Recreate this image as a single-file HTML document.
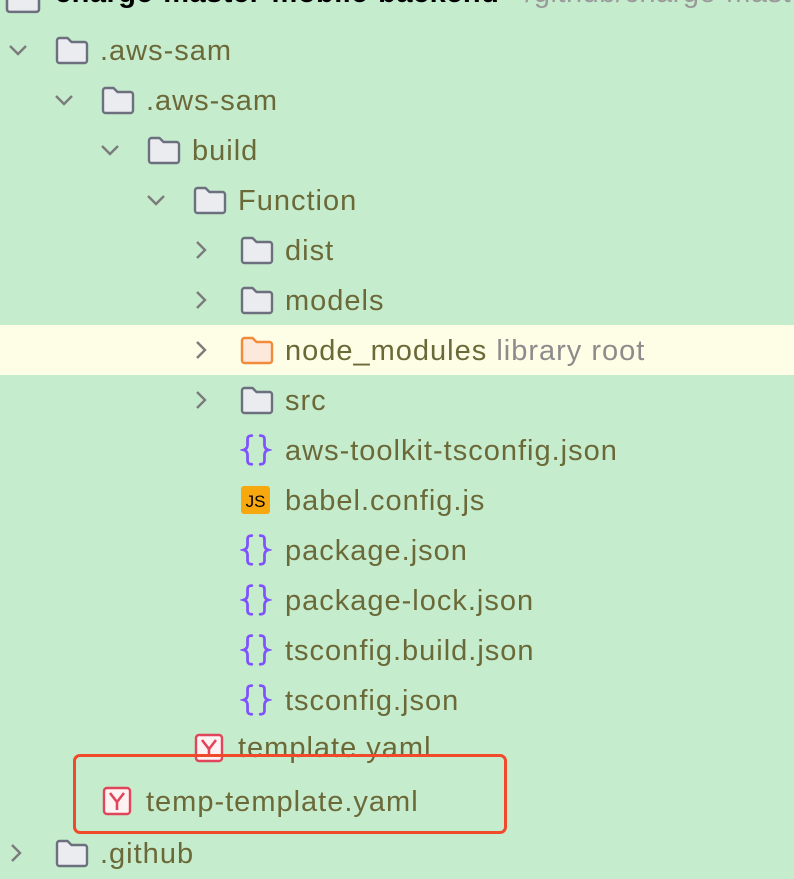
<!DOCTYPE html>
<html><head><meta charset="utf-8"><style>
body{margin:0;width:794px;height:862px;overflow:hidden;background:#c6ecce;font-family:"Liberation Sans","DejaVu Sans",sans-serif;position:relative}
.r{position:absolute;left:0;width:794px;height:50px}
.t{position:absolute;top:1px;line-height:50px;font-size:29px;letter-spacing:1px;color:#6b6938;white-space:nowrap}
.i{position:absolute}
.hl{background:#fefde6}
.box{position:absolute;left:73px;top:754px;width:428px;height:74px;border:3px solid #f04a2a;border-radius:7px}
</style></head><body>
<svg width="0" height="0" style="position:absolute"><defs>
<symbol id="f" viewBox="0 0 36 30"><path d="M3 5.5a2.5 2.5 0 0 1 2.5-2.5h8l4 4h13a2.5 2.5 0 0 1 2.5 2.5v16a2.5 2.5 0 0 1-2.5 2.5h-25A2.5 2.5 0 0 1 3 25.5z" fill="#ebecf0" stroke="#6c707e" stroke-width="2.4" stroke-linejoin="round"/></symbol>
<symbol id="fo" viewBox="0 0 36 30"><path d="M3 5.5a2.5 2.5 0 0 1 2.5-2.5h8l4 4h13a2.5 2.5 0 0 1 2.5 2.5v16a2.5 2.5 0 0 1-2.5 2.5h-25A2.5 2.5 0 0 1 3 25.5z" fill="#fde8dc" stroke="#f08b3a" stroke-width="2.4" stroke-linejoin="round"/></symbol>
<symbol id="cd" viewBox="0 0 20 12"><path d="M2 2l8 8 8-8" fill="none" stroke="#7b7b7b" stroke-width="2.4"/></symbol>
<symbol id="cr" viewBox="0 0 12 20"><path d="M2 2l8 8-8 8" fill="none" stroke="#7b7b7b" stroke-width="2.4"/></symbol>
<symbol id="j" viewBox="0 0 30 34"><path d="M11 2.5c-3 0-4 1-4 3.5v5c0 2.5-1 4.3-3.5 5 2.5.7 3.5 2.5 3.5 5v5c0 2.5 1 3.5 4 3.5M19 2.5c3 0 4 1 4 3.5v5c0 2.5 1 4.3 3.5 5-2.5.7-3.5 2.5-3.5 5v5c0 2.5-1 3.5-4 3.5" fill="none" stroke="#7f52ff" stroke-width="2.6" stroke-linecap="round"/></symbol>
<symbol id="y" viewBox="0 0 30 30"><rect x="2" y="2" width="26" height="26" rx="3" fill="#fff2f3" stroke="#e0455a" stroke-width="2.4"/><path d="M8 7l7 9 7-9M15 16v8" fill="none" stroke="#e0455a" stroke-width="2.6"/></symbol>
</defs></svg>

<div class="r" style="top:-28px"><svg class="i" style="left:3px;top:10px" width="40" height="32"><use href="#f"/></svg><span class="t" style="left:55px;color:#000;font-weight:bold;line-height:40px;letter-spacing:0.5px">charge-master-mobile-backend <span style="color:#9a9a9a;font-weight:normal">~/github/charge-master</span></span></div>

<div class="r" style="top:25px"><svg class="i" style="left:8px;top:19px" width="20" height="12"><use href="#cd"/></svg><svg class="i" style="left:54px;top:10px" width="36" height="30"><use href="#f"/></svg><span class="t" style="left:100px">.aws-sam</span></div>
<div class="r" style="top:75px"><svg class="i" style="left:54px;top:19px" width="20" height="12"><use href="#cd"/></svg><svg class="i" style="left:100px;top:10px" width="36" height="30"><use href="#f"/></svg><span class="t" style="left:146px">.aws-sam</span></div>
<div class="r" style="top:125px"><svg class="i" style="left:100px;top:19px" width="20" height="12"><use href="#cd"/></svg><svg class="i" style="left:146px;top:10px" width="36" height="30"><use href="#f"/></svg><span class="t" style="left:192px">build</span></div>
<div class="r" style="top:175px"><svg class="i" style="left:146px;top:19px" width="20" height="12"><use href="#cd"/></svg><svg class="i" style="left:192px;top:10px" width="36" height="30"><use href="#f"/></svg><span class="t" style="left:238px">Function</span></div>
<div class="r" style="top:225px"><svg class="i" style="left:195px;top:15px" width="12" height="20"><use href="#cr"/></svg><svg class="i" style="left:239px;top:10px" width="36" height="30"><use href="#f"/></svg><span class="t" style="left:285px">dist</span></div>
<div class="r" style="top:275px"><svg class="i" style="left:195px;top:15px" width="12" height="20"><use href="#cr"/></svg><svg class="i" style="left:239px;top:10px" width="36" height="30"><use href="#f"/></svg><span class="t" style="left:285px">models</span></div>
<div class="r hl" style="top:325px"><svg class="i" style="left:195px;top:15px" width="12" height="20"><use href="#cr"/></svg><svg class="i" style="left:239px;top:10px" width="36" height="30"><use href="#fo"/></svg><span class="t" style="left:285px">node_modules <span style="color:#8c8c8c">library root</span></span></div>
<div class="r" style="top:375px"><svg class="i" style="left:195px;top:15px" width="12" height="20"><use href="#cr"/></svg><svg class="i" style="left:239px;top:10px" width="36" height="30"><use href="#f"/></svg><span class="t" style="left:285px">src</span></div>
<div class="r" style="top:425px"><svg class="i" style="left:240px;top:8px" width="32" height="36"><use href="#j"/></svg><span class="t" style="left:285px">aws-toolkit-tsconfig.json</span></div>
<div class="r" style="top:475px"><div class="i" style="left:241px;top:11px;width:29px;height:28px;background:#f7a80f;border-radius:3px;font:17px 'Liberation Sans',sans-serif;color:#000;text-align:center;line-height:31px">JS</div><span class="t" style="left:285px">babel.config.js</span></div>
<div class="r" style="top:525px"><svg class="i" style="left:240px;top:8px" width="32" height="36"><use href="#j"/></svg><span class="t" style="left:285px">package.json</span></div>
<div class="r" style="top:575px"><svg class="i" style="left:240px;top:8px" width="32" height="36"><use href="#j"/></svg><span class="t" style="left:285px">package-lock.json</span></div>
<div class="r" style="top:625px"><svg class="i" style="left:240px;top:8px" width="32" height="36"><use href="#j"/></svg><span class="t" style="left:285px">tsconfig.build.json</span></div>
<div class="r" style="top:675px"><svg class="i" style="left:240px;top:8px" width="32" height="36"><use href="#j"/></svg><span class="t" style="left:285px">tsconfig.json</span></div>
<div class="r" style="top:722px"><svg class="i" style="left:194px;top:11px" width="30" height="30"><use href="#y"/></svg><span class="t" style="left:238px">template.yaml</span></div>
<div class="r" style="top:776px"><svg class="i" style="left:102px;top:10px" width="30" height="30"><use href="#y"/></svg><span class="t" style="left:146px">temp-template.yaml</span></div>
<div class="box"></div>
<div class="r" style="top:828px"><svg class="i" style="left:10px;top:15px" width="12" height="20"><use href="#cr"/></svg><svg class="i" style="left:54px;top:10px" width="36" height="30"><use href="#f"/></svg><span class="t" style="left:100px">.github</span></div>
</body></html>
